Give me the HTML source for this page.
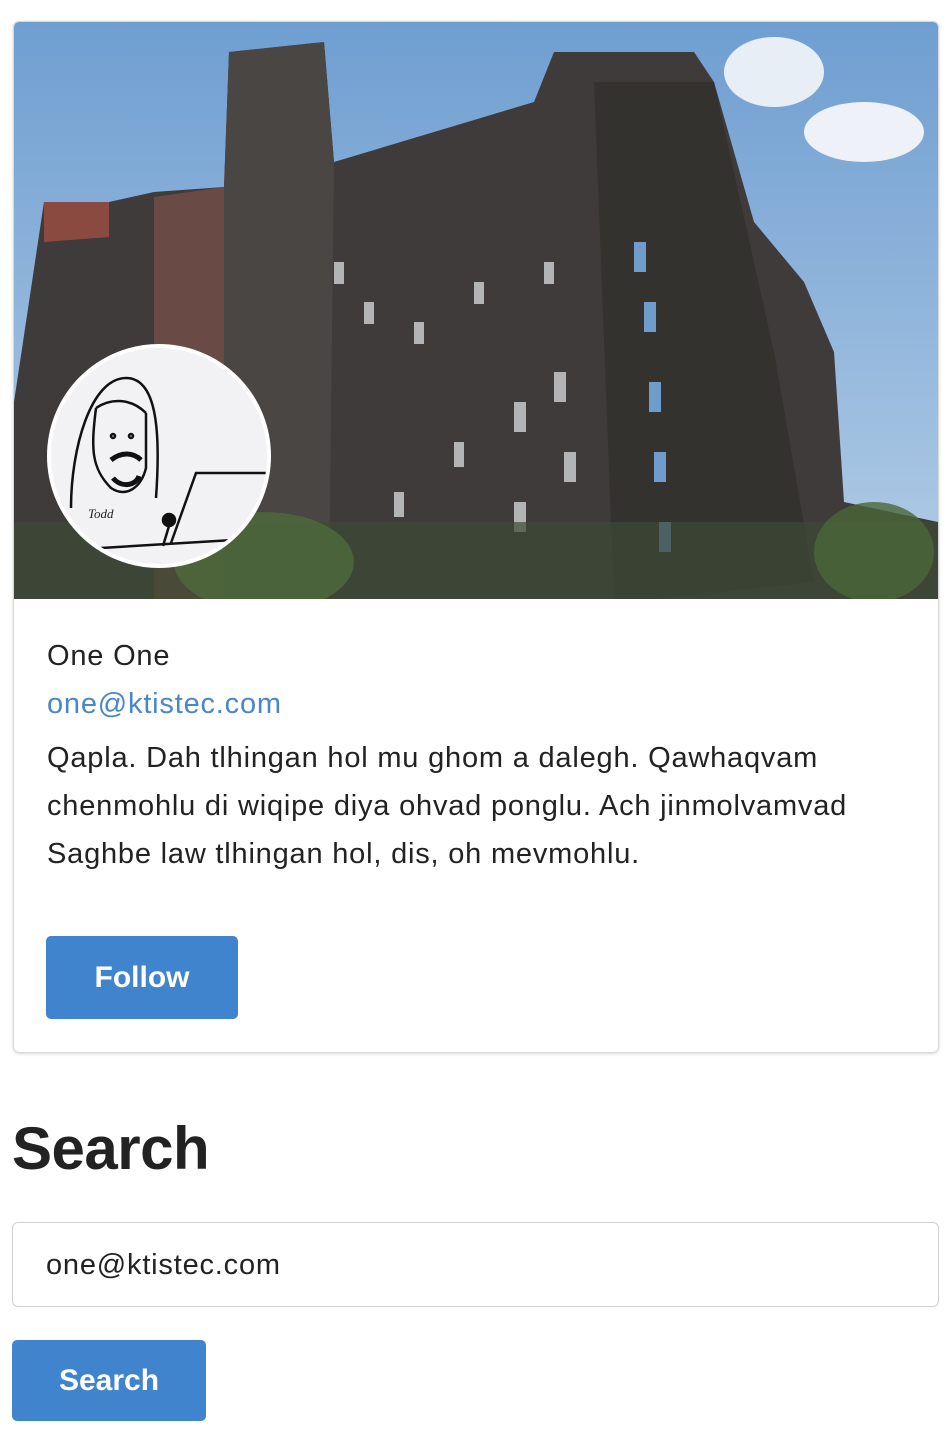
<!DOCTYPE html>
<html><head><meta charset="utf-8"><style>
body{margin:0;background:#fff;font-family:"Liberation Sans",sans-serif;color:#222;width:950px;height:1448px;overflow:hidden;position:relative}
.card{position:absolute;left:13px;top:21px;width:924px;height:1030px;border:1px solid #d8d8d8;border-radius:6px;box-shadow:0 1px 3px rgba(0,0,0,.15);overflow:hidden}
.photo{position:absolute;left:0;top:0;width:924px;height:577px}
.av{position:absolute;left:33px;top:322px;width:216px;height:216px;border-radius:50%;border:4px solid #fff;background:#f2f2f4;overflow:hidden}
.t{position:absolute;left:33px;font-size:29px;letter-spacing:0.8px}
.btn{position:absolute;background:#3f84cc;color:#fff;font-weight:bold;border-radius:5px;text-align:center}
</style></head><body>
<div class="card">
<svg class="photo" viewBox="0 0 924 577" preserveAspectRatio="none">
<defs><linearGradient id="sky" x1="0" y1="0" x2="0" y2="1"><stop offset="0" stop-color="#6f9ed1"/><stop offset="1" stop-color="#b3cde6"/></linearGradient></defs>
<rect width="924" height="577" fill="url(#sky)"/>
<ellipse cx="760" cy="50" rx="50" ry="35" fill="#e8eef6"/>
<ellipse cx="850" cy="110" rx="60" ry="30" fill="#eef2f8"/>
<polygon points="30,180 95,180 140,170 210,165 215,30 310,20 320,140 520,80 540,30 680,30 700,60 740,200 790,260 820,330 830,480 924,500 924,577 0,577 0,380" fill="#3e3b3a"/>
<polygon points="210,165 215,30 310,20 320,140 315,577 210,577" fill="#4a4644"/>
<polygon points="140,175 210,165 210,577 140,577" fill="#6a4a44"/>
<polygon points="30,180 95,180 95,215 30,220" fill="#8a4a40"/>
<polygon points="580,60 700,60 760,330 800,560 640,577 600,577" fill="#34322f"/>
<g fill="#cfd3d6" opacity=".8">
<rect x="320" y="240" width="10" height="22"/><rect x="350" y="280" width="10" height="22"/><rect x="400" y="300" width="10" height="22"/><rect x="460" y="260" width="10" height="22"/><rect x="530" y="240" width="10" height="22"/><rect x="500" y="380" width="12" height="30"/><rect x="540" y="350" width="12" height="30"/><rect x="550" y="430" width="12" height="30"/><rect x="500" y="480" width="12" height="30"/><rect x="440" y="420" width="10" height="25"/><rect x="380" y="470" width="10" height="25"/>
</g>
<g fill="#6f9ccb"><rect x="620" y="220" width="12" height="30"/><rect x="630" y="280" width="12" height="30"/><rect x="635" y="360" width="12" height="30"/><rect x="640" y="430" width="12" height="30"/><rect x="645" y="500" width="12" height="30"/></g>
<rect x="0" y="500" width="924" height="77" fill="#3d4a34" opacity=".7"/>
<ellipse cx="250" cy="540" rx="90" ry="50" fill="#4d6a3c" opacity=".8"/>
<ellipse cx="860" cy="530" rx="60" ry="50" fill="#4a6738" opacity=".8"/>
</svg>
<div class="av"><svg width="216" height="216" viewBox="0 0 216 216" fill="none" stroke="#111" stroke-width="2.5">
<path d="M20 160 C20 100 40 30 75 30 C105 30 110 80 105 150 M45 60 C60 50 80 50 95 65 M45 60 C40 100 40 120 60 140 C75 150 90 140 95 120 L95 65"/>
<path d="M60 112 C70 104 82 104 90 112" stroke-width="5"/><circle cx="62" cy="88" r="2"/><circle cx="80" cy="88" r="2"/>
<path d="M62 130 C70 140 85 138 88 128" stroke-width="5"/>
<path d="M120 195 L145 125 L216 125 M50 200 L216 190"/><circle cx="118" cy="172" r="6" fill="#111"/><path d="M118 178 L112 198"/>
</svg><div style="position:absolute;left:37px;top:158px;font-size:13px;font-family:'Liberation Serif',serif;font-style:italic">Todd</div></div>
<div class="t" style="top:618px;color:#222">One One</div>
<div class="t" style="top:666px;color:#4a86c8">one@ktistec.com</div>
<div class="t" style="top:712px;line-height:48px;width:830px">Qapla. Dah tlhingan hol mu ghom a dalegh. Qawhaqvam chenmohlu di wiqipe diya ohvad ponglu. Ach jinmolvamvad Saghbe law tlhingan hol, dis, oh mevmohlu.</div>
<div class="btn" style="left:32px;top:914px;width:192px;height:83px;line-height:83px;font-size:30px">Follow</div>
</div>
<div style="position:absolute;left:12px;top:1114px;font-size:60px;font-weight:bold;letter-spacing:-0.5px">Search</div>
<div style="position:absolute;left:12px;top:1222px;width:927px;height:85px;border:1.5px solid #d0d0d0;border-radius:6px;box-sizing:border-box"></div>
<div style="position:absolute;left:46px;top:1249px;font-size:29px;letter-spacing:0.8px">one@ktistec.com</div>
<div class="btn" style="left:12px;top:1340px;width:194px;height:81px;line-height:81px;font-size:30px">Search</div>
</body></html>
